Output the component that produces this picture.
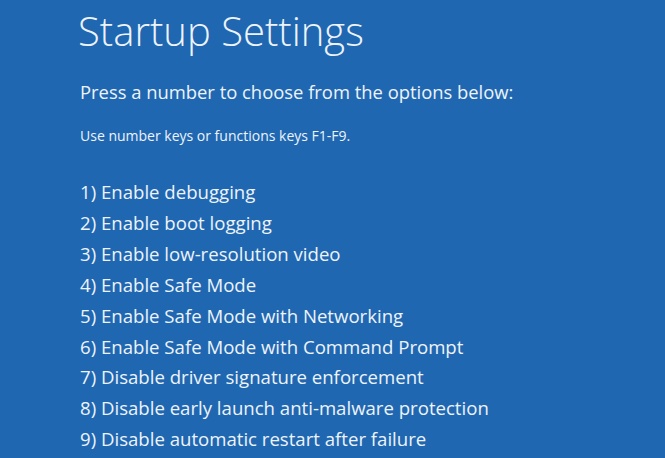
const options = [
  "1) Enable debugging",
  "2) Enable boot logging",
  "3) Enable low-resolution video",
  "4) Enable Safe Mode",
  "5) Enable Safe Mode with Networking",
  "6) Enable Safe Mode with Command Prompt",
  "7) Disable driver signature enforcement",
  "8) Disable early launch anti-malware protection",
  "9) Disable automatic restart after failure",
]

export default function App() {
  return (
    <div
      className="w-[665px] h-[458px] overflow-hidden bg-[#1f67b1] text-[#eef3fa] pl-[80px]"
      style={{ fontFamily: '"Open Sans", "Noto Sans", sans-serif' }}
    >
      <h1 className="text-[40px] font-light leading-[48px] pt-[7px] -ml-[2px]">Startup Settings</h1>
      <p className="text-[18.4px] leading-[26px] mt-[24px]">Press a number to choose from the options below:</p>
      <p className="text-[14px] leading-[18px] mt-[22px]">Use number keys or functions keys F1-F9.</p>
      <ul className="mt-[32px]">
        {options.map((o) => (
          <li key={o} className="text-[18.6px] leading-[30.9px]">
            {o}
          </li>
        ))}
      </ul>
    </div>
  )
}
